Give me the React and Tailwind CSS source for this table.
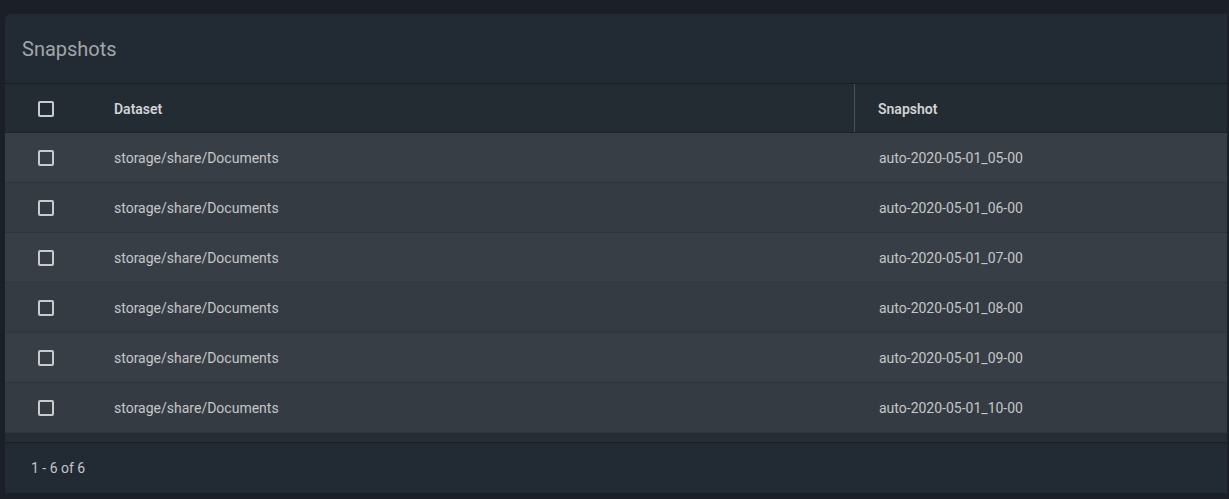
import React from 'react';

const rows = [
  { dataset: 'storage/share/Documents', snapshot: 'auto-2020-05-01_05-00' },
  { dataset: 'storage/share/Documents', snapshot: 'auto-2020-05-01_06-00' },
  { dataset: 'storage/share/Documents', snapshot: 'auto-2020-05-01_07-00' },
  { dataset: 'storage/share/Documents', snapshot: 'auto-2020-05-01_08-00' },
  { dataset: 'storage/share/Documents', snapshot: 'auto-2020-05-01_09-00' },
  { dataset: 'storage/share/Documents', snapshot: 'auto-2020-05-01_10-00' },
];

const Checkbox = () => (
  <span className="block w-[16px] h-[16px] border-2 border-[#c9cacb] rounded-[2px]" />
);

const App = () => {
  return (
    <div
      className="min-h-[499px] bg-[#1b2028] pt-[14px] pl-[5px] pr-[2px]"
      style={{ fontFamily: 'Roboto, "Liberation Sans", sans-serif' }}
    >
      {/* Card */}
      <div className="bg-[#222a33] rounded-tl-[6px] h-[479px] flex flex-col">
        {/* Title */}
        <div className="h-[70px] flex items-center pl-[17px] border-b border-[#1a1f26]">
          <h2 className="text-[20px] text-[#a3a6a9] leading-none">Snapshots</h2>
        </div>

        {/* Table head */}
        <div className="h-[49px] pt-[2px] flex items-stretch bg-[#232b33] border-b border-[#1e242b] text-[14px] font-semibold text-[#d2d3d4]">
          <div className="w-[85px] pl-[33px] flex items-center">
            <Checkbox />
          </div>
          <div className="w-[765px] pl-[24px] flex items-center border-r border-[#4a5058] -mt-[2px] pt-[2px]">Dataset</div>
          <div className="flex-1 pl-[23px] flex items-center">Snapshot</div>
        </div>

        {/* Rows */}
        {rows.map((row, i) => (
          <div
            key={row.snapshot}
            className={
              'h-[50px] pt-[1px] flex items-center text-[14px] text-[#c4c6c8] border-b border-[#30363d] ' +
              (i % 2 === 0 ? 'bg-[#383e45]' : 'bg-[#353b42]')
            }
          >
            <div className="w-[85px] pl-[33px] flex items-center">
              <Checkbox />
            </div>
            <div className="w-[765px] pl-[24px]">{row.dataset}</div>
            <div className="flex-1 pl-[24px]">{row.snapshot}</div>
          </div>
        ))}

        <div className="h-[10px] bg-[#262d35] border-b border-[#1a1f26]" />

        {/* Footer */}
        <div className="flex-1 pt-[1px] flex items-center pl-[26px] text-[14px] text-[#c4c6c8]">1 - 6 of 6</div>
      </div>
    </div>
  );
};

export default App;
